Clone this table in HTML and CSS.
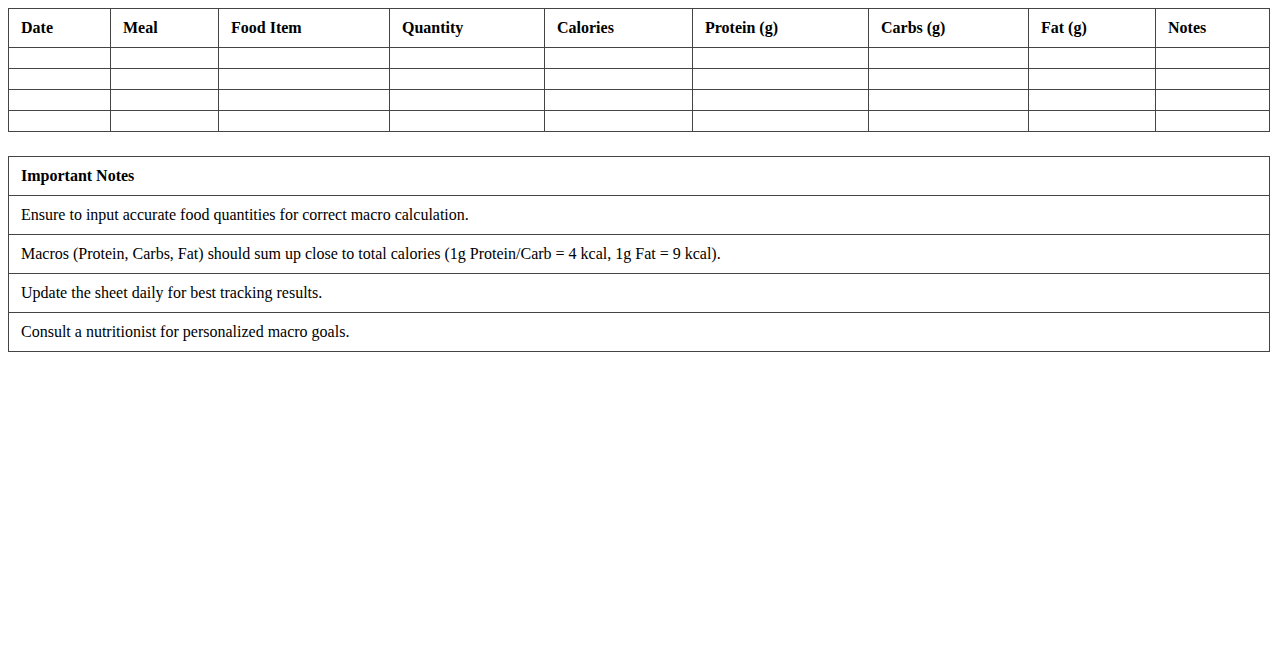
FILE: index.html
```html
<!DOCTYPE html>
<html>
<head>
<meta charset="utf-8">
<link rel="stylesheet" href="styles.css">
</head>
<body>
<table class="log">
  <colgroup>
    <col class="c1"><col class="c2"><col class="c3"><col class="c4"><col class="c5"><col class="c6"><col class="c7"><col class="c8"><col class="c9">
  </colgroup>
  <thead>
    <tr><th>Date</th><th>Meal</th><th>Food Item</th><th>Quantity</th><th>Calories</th><th>Protein (g)</th><th>Carbs (g)</th><th>Fat (g)</th><th>Notes</th></tr>
  </thead>
  <tbody>
    <tr><td></td><td></td><td></td><td></td><td></td><td></td><td></td><td></td><td></td></tr>
    <tr><td></td><td></td><td></td><td></td><td></td><td></td><td></td><td></td><td></td></tr>
    <tr><td></td><td></td><td></td><td></td><td></td><td></td><td></td><td></td><td></td></tr>
    <tr><td></td><td></td><td></td><td></td><td></td><td></td><td></td><td></td><td></td></tr>
  </tbody>
</table>
<table class="notes">
  <thead><tr><th>Important Notes</th></tr></thead>
  <tbody>
    <tr><td>Ensure to input accurate food quantities for correct macro calculation.</td></tr>
    <tr><td>Macros (Protein, Carbs, Fat) should sum up close to total calories (1g Protein/Carb = 4 kcal, 1g Fat = 9 kcal).</td></tr>
    <tr><td>Update the sheet daily for best tracking results.</td></tr>
    <tr><td>Consult a nutritionist for personalized macro goals.</td></tr>
  </tbody>
</table>
</body>
</html>
```

FILE: styles.css
```css
html, body {
  background: #fff;
}
body {
  margin: 8px;
  font-family: "Liberation Serif", "Times New Roman", serif;
  font-size: 16px;
  color: #000;
}
table {
  width: 100%;
  border-collapse: collapse;
}
th, td {
  border: 1px solid #444;
  padding: 10px 12px;
  text-align: left;
  line-height: 18px;
  vertical-align: middle;
}
th {
  font-weight: bold;
}
.log {
  margin-bottom: 24px;
}
.c1 { width: 102px; }
.c2 { width: 108px; }
.c3 { width: 171px; }
.c4 { width: 155px; }
.c5 { width: 148px; }
.c6 { width: 176px; }
.c7 { width: 160px; }
.c8 { width: 127px; }
```
